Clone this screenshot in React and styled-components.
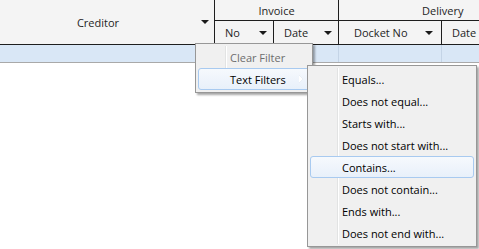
import React from "react";
import styled, { createGlobalStyle } from "styled-components";

const Global = createGlobalStyle`
  html, body { margin: 0; padding: 0; background: #fff; }
  body { font-family: "Open Sans", "Noto Sans", sans-serif; font-size: 11px; color: #000; }
  * { box-sizing: border-box; }
`;

const Page = styled.div`
  position: relative;
  width: 479px;
  height: 249px;
  overflow: hidden;
  background: #fff;
`;

const Header = styled.div`
  display: grid;
  grid-template-columns: 214px 59px 65px 103px 1fr;
  grid-template-rows: 21px 23px;
  background: #f4f4f4;
  border-bottom: 1px solid #1e1e1e;
  width: 520px;
`;

const Cell = styled.div`
  position: relative;
  display: flex;
  align-items: center;
  justify-content: ${(p) => (p.$center ? "center" : "flex-start")};
  padding-left: ${(p) => p.$pad || 0}px;
  border-left: ${(p) => (p.$first ? "none" : "1px solid #1e1e1e")};
  border-bottom: ${(p) => (p.$bottom ? "1px solid #1e1e1e" : "none")};
  grid-column: ${(p) => p.$col};
  grid-row: ${(p) => p.$row};
  color: #1e1e1e;
  white-space: nowrap;
`;

const Arrow = styled.span`
  position: absolute;
  right: ${(p) => p.$right}px;
  top: 50%;
  margin-top: -2px;
  width: 0;
  height: 0;
  border-left: 4px solid transparent;
  border-right: 4px solid transparent;
  border-top: 4px solid #1a1a1a;
`;

const Row = styled.div`
  display: grid;
  grid-template-columns: 214px 59px 65px 103px 1fr;
  height: 18px;
  background: #d9e7f6;
  border-bottom: 1px solid #a9a9a9;
  width: 520px;
`;

const RowCell = styled.div`
  border-left: ${(p) => (p.$first ? "none" : "1px solid #c4d4e6")};
`;

const Menu = styled.div`
  position: absolute;
  left: ${(p) => p.$x}px;
  top: ${(p) => p.$y}px;
  width: ${(p) => p.$w}px;
  padding: 2px;
  background: #f0f0f0;
  border: 1px solid #979797;
  box-shadow: 2px 2px 2px rgba(0, 0, 0, 0.35);
  &::before {
    content: "";
    position: absolute;
    left: 29px;
    top: 2px;
    bottom: 2px;
    width: 1px;
    background: #e2e3e3;
    box-shadow: 1px 0 0 #fff;
  }
`;

const Item = styled.div`
  position: relative;
  height: 22px;
  display: flex;
  align-items: center;
  padding-left: 31px;
  color: ${(p) => (p.$disabled ? "#6d6d6d" : "#000")};
  border: 1px solid ${(p) => (p.$active ? "#a8caf0" : "transparent")};
  border-radius: 3px;
  background: ${(p) =>
    p.$active ? "linear-gradient(#f6f9fd, #e8f0fa)" : "transparent"};
  white-space: nowrap;
  font-size: 11px;
`;

const SubArrow = styled.span`
  position: absolute;
  right: 6px;
  top: 50%;
  margin-top: -4px;
  width: 0;
  height: 0;
  border-top: 4px solid transparent;
  border-bottom: 4px solid transparent;
  border-left: 4px solid #ffffff;
  filter: drop-shadow(0 0 0.5px #b8c8dc);
`;

const textFilters = [
  "Equals...",
  "Does not equal...",
  "Starts with...",
  "Does not start with...",
  "Contains...",
  "Does not contain...",
  "Ends with...",
  "Does not end with...",
];

export default function App() {
  return (
    <Page>
      <Global />
      <Header>
        <Cell $first $col="1" $row="1 / span 2" $center>
          <span style={{ marginRight: 18 }}>Creditor</span>
          <Arrow $right={5} />
        </Cell>
        <Cell $col="2 / span 2" $row="1" $center $bottom>Invoice</Cell>
        <Cell $col="4 / span 2" $row="1" $bottom $pad={83}>Delivery</Cell>
        <Cell $col="2" $row="2" $pad={10}>
          No
          <Arrow $right={6} />
        </Cell>
        <Cell $col="3" $row="2" $pad={10}>
          Date
          <Arrow $right={6} />
        </Cell>
        <Cell $col="4" $row="2" $pad={15}>
          Docket No
          <Arrow $right={8} />
        </Cell>
        <Cell $col="5" $row="2" $pad={10}>Date</Cell>
      </Header>
      <Row>
        <RowCell $first />
        <RowCell />
        <RowCell />
        <RowCell />
        <RowCell />
      </Row>

      <Menu $x={195} $y={43} $w={118}>
        <Item $disabled>Clear Filter</Item>
        <Item $active>
          Text Filters
          <SubArrow />
        </Item>
      </Menu>

      <Menu $x={307} $y={65} $w={170}>
        {textFilters.map((t) => (
          <Item key={t} $active={t === "Contains..."}>
            {t}
          </Item>
        ))}
      </Menu>
    </Page>
  );
}
